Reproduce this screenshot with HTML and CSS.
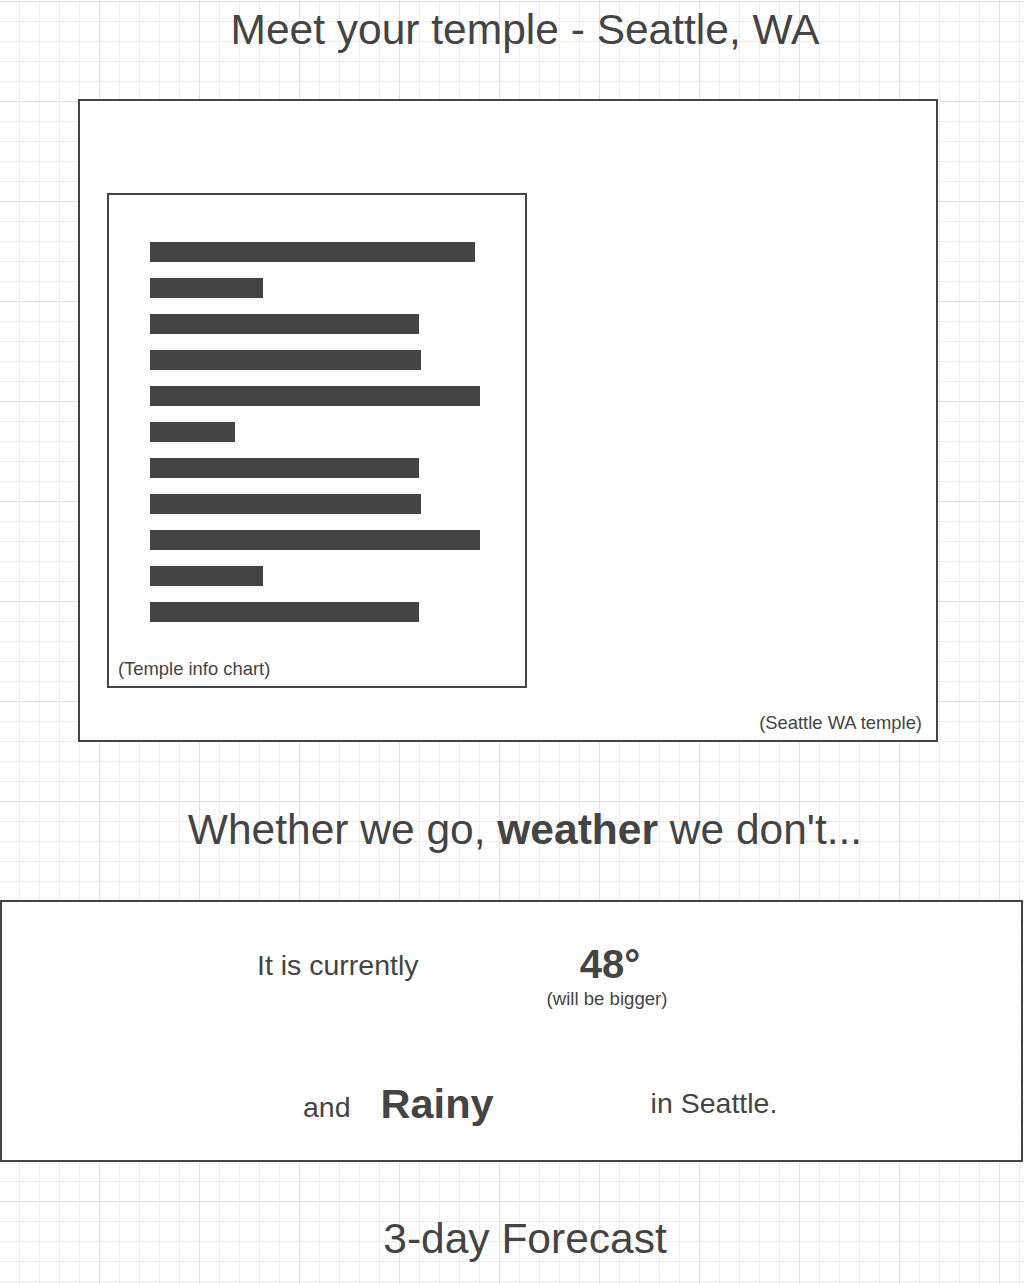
FILE: index.html
```
<!DOCTYPE html>
<html lang="en">

<head>
    <meta charset="UTF-8">
    <meta name="viewport" content="width=device-width, initial-scale=1.0">
    <title>Seattle, WA - Temple</title>
    <link rel="stylesheet" href="styles.css">
</head>

<body>
    <h1 class="page-title">Meet your temple - Seattle, WA</h1>

    <div class="temple-card">
        <div class="info-chart">
            <div class="chart-bars">
                <div class="bar" style="width: 325px;"></div>
                <div class="bar" style="width: 113px;"></div>
                <div class="bar" style="width: 269px;"></div>
                <div class="bar" style="width: 271px;"></div>
                <div class="bar" style="width: 330px;"></div>
                <div class="bar" style="width: 85px;"></div>
                <div class="bar" style="width: 269px;"></div>
                <div class="bar" style="width: 271px;"></div>
                <div class="bar" style="width: 330px;"></div>
                <div class="bar" style="width: 113px;"></div>
                <div class="bar" style="width: 269px;"></div>
            </div>
            <p class="caption chart-caption">(Temple info chart)</p>
        </div>
        <p class="caption temple-caption">(Seattle WA temple)</p>
    </div>

    <h2 class="section-title">Whether we go, <strong>weather</strong> we don't...</h2>

    <div class="weather">
        <div class="weather-row current-row">
            <span class="weather-text current-label">It is currently</span>
            <div class="temp-cell">
                <div class="temp">48&deg;</div>
                <div class="temp-note">(will be bigger)</div>
            </div>
        </div>
        <div class="weather-row condition-row">
            <span class="weather-text and-label">and</span>
            <span class="condition">Rainy</span>
            <span class="weather-text city-label">in Seattle.</span>
        </div>
    </div>

    <h2 class="section-title forecast-title">3-day Forecast</h2>
</body>

</html>
```

FILE: styles.css
```
html {
    background-color: #fff;
}

body {
    font-family: "Liberation Sans", Arial, sans-serif;
    color: #444;
    margin: 0;
    min-height: 1284px;
    background-color: #fff;
    background-image:
        linear-gradient(to right, #e2e2e2 1px, transparent 1px),
        linear-gradient(to bottom, #e2e2e2 1px, transparent 1px),
        linear-gradient(to right, #ededed 1px, transparent 1px),
        linear-gradient(to bottom, #ededed 1px, transparent 1px);
    background-size: 100px 100px, 100px 100px, 20px 20px, 20px 20px;
    background-position: 99px 0, 0 1px, 19px 0, 0 1px;
}

.page-title,
.section-title {
    font-size: 42.5px;
    font-weight: normal;
    line-height: 48px;
    text-align: center;
    margin: 0;
    padding-left: 26px;
}

.page-title {
    padding-top: 6px;
}

/* temple card */
.temple-card {
    box-sizing: border-box;
    display: flex;
    flex-direction: column;
    width: 860px;
    height: 643px;
    margin: 45px 0 0 78px;
    padding: 92px 14px 7px 27px;
    border: 2px solid #444;
    background-color: #fff;
}

.info-chart {
    box-sizing: border-box;
    align-self: flex-start;
    width: 420px;
    height: 495px;
    padding: 47px 9px 0;
    border: 2px solid #444;
}

.chart-bars {
    display: flex;
    flex-direction: column;
    gap: 16px;
    margin-left: 32px;
}

.bar {
    height: 20px;
    background-color: #444;
}

.caption {
    font-size: 18.4px;
    line-height: 21px;
    margin: 0;
}

.chart-caption {
    margin-top: 36px;
}

.temple-caption {
    margin-top: auto;
    align-self: flex-end;
}

.section-title {
    margin-top: 64px;
}

.section-title strong {
    font-weight: bold;
}

/* weather */
.weather {
    box-sizing: border-box;
    display: flex;
    flex-direction: column;
    width: 1023px;
    height: 262px;
    margin-top: 46px;
    border: 2px solid #444;
    background-color: #fff;
}

.weather-row {
    display: flex;
    align-items: flex-start;
}

.current-row {
    height: 178px;
    padding-left: 255px;
}

.condition-row {
    padding-left: 301px;
}

.weather-text {
    font-size: 28.5px;
    line-height: 32px;
}

.current-label {
    width: 282px;
    margin-top: 47px;
}

.temp-cell {
    width: 136px;
    margin-top: 39px;
    text-align: center;
}

.temp {
    font-size: 40px;
    font-weight: bold;
    line-height: 46px;
    padding-left: 6px;
}

.temp-note {
    font-size: 18.6px;
    line-height: 21px;
    margin-top: 1px;
}

.and-label {
    margin-top: 11px;
}

.condition {
    font-size: 41.5px;
    font-weight: bold;
    line-height: 46px;
    margin: 1px 0 0 30px;
}

.city-label {
    margin: 7px 0 0 157px;
}

.forecast-title {
    margin-top: 53px;
}
```
